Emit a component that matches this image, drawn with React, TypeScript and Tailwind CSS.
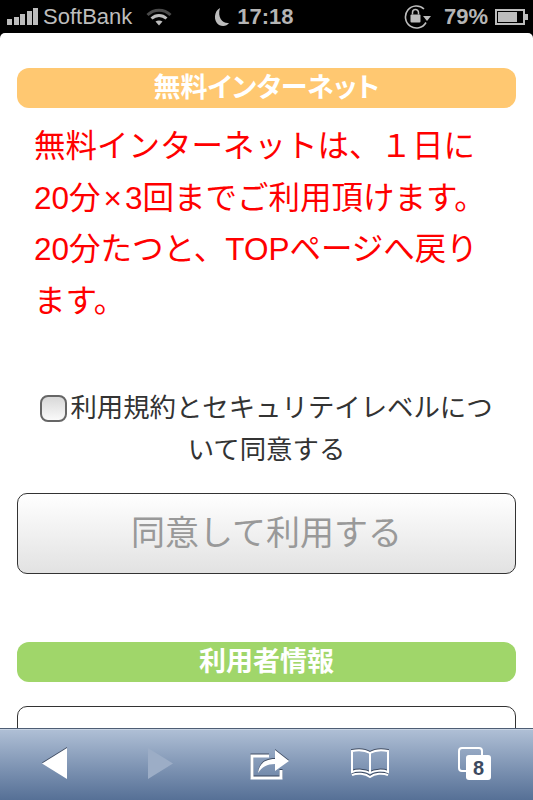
import React from 'react'

const jp = 'font-["Liberation_Sans","Noto_Sans_CJK_JP",sans-serif]'

function StatusBar() {
  return (
    <div className="relative h-[33px] shrink-0 bg-black font-['Liberation_Sans',sans-serif] text-[#bdbdbd]">
      <div className="flex h-full items-center pl-[7px] pr-[5px]">
        <div className="flex items-end gap-[1.5px] pb-[1px]">
          <span className="h-[6px] w-[5px] bg-[#bdbdbd]" />
          <span className="h-[8px] w-[5px] bg-[#bdbdbd]" />
          <span className="h-[11px] w-[5px] bg-[#bdbdbd]" />
          <span className="h-[14px] w-[5px] bg-[#bdbdbd]" />
          <span className="h-[17px] w-[5px] bg-[#bdbdbd]" />
        </div>
        <span className="ml-[5px] text-[22px] leading-none">SoftBank</span>
        <svg className="ml-[14px]" width="26" height="18" viewBox="0 0 26 18" fill="none">
          <path d="M1.5 7 C8 0.5 18 0.5 24.5 7" stroke="#4a4a4a" strokeWidth="3" />
          <path d="M5.5 10.5 C10 6.5 16 6.5 20.5 10.5" stroke="#bdbdbd" strokeWidth="3" />
          <path d="M9.5 13.5 C11.5 12 14.5 12 16.5 13.5 L13 17.5 Z" fill="#bdbdbd" />
        </svg>
        <svg className="ml-[40px]" width="18" height="20" viewBox="0 0 18 20">
          <path d="M8 1 C2 4 1 14 7 18 C11 20 15 19 17 16 C11 17 5 11 8 1 Z" fill="#bdbdbd" />
        </svg>
        <span className="ml-[7px] text-[22px] leading-none font-bold text-[#b5b5b5]">17:18</span>
        <svg className="ml-auto" width="28" height="25" viewBox="0 0 28 25" fill="none">
          <path d="M23 18.5 A 11 11 0 1 1 21 5" stroke="#bdbdbd" strokeWidth="1.6" />
          <path d="M20 12 H28 L24 17 Z" fill="#bdbdbd" />
          <rect x="7.5" y="10.5" width="10" height="8" rx="1" fill="#bdbdbd" />
          <path d="M9.5 10.5 V8.5 A3 3 0 0 1 15.5 8.5 V10.5" stroke="#bdbdbd" strokeWidth="1.5" />
        </svg>
        <span className="ml-[13px] text-[22px] leading-none font-bold text-[#b5b5b5]">79%</span>
        <div className="ml-[7px] flex items-center">
          <div className="flex h-[16px] w-[30px] items-stretch border-2 border-[#bdbdbd] p-[1px]">
            <div className="w-[79%] bg-[#bdbdbd]" />
          </div>
          <span className="h-[6px] w-[3px] bg-[#bdbdbd]" />
        </div>
      </div>
    </div>
  )
}

function Banner({ color, children }: { color: string; children: React.ReactNode }) {
  return (
    <div className={`flex h-10 items-center justify-center rounded-[12px] text-[27px] font-bold text-white [font-feature-settings:'palt'] ${color}`}>
      {children}
    </div>
  )
}

function Toolbar() {
  const shadow = 'drop-shadow-[0_-1px_0_rgba(30,40,60,0.7)]'
  return (
    <div className="relative h-[72px] shrink-0 border-t border-[#4e5d74] bg-gradient-to-b from-[#b0c0d6] to-[#567096] shadow-[inset_0_1px_0_#c8d4e4]">
      <div className="flex h-full items-center pb-[2px] pl-[41px]">
        <svg className={shadow} width="26" height="33" viewBox="0 0 26 33">
          <path d="M26 1 V32 L1 16.5 Z" fill="#fff" />
        </svg>
        <svg className="ml-[81px]" width="26" height="33" viewBox="0 0 26 33">
          <path d="M0 1 V32 L25 16.5 Z" fill="#9cadc6" />
        </svg>
        <svg className={`ml-[76px] ${shadow}`} width="40" height="32" viewBox="0 0 40 32" fill="none">
          <path d="M19 8 H2 V30 H31 V22" stroke="#fff" strokeWidth="3" />
          <path d="M8 25 C9 15 16 11 25 11 V2 L39 13 L25 23 V16 C17 16 12 19 8 25 Z" fill="#fff" />
        </svg>
        <svg className={`ml-[60px] ${shadow}`} width="40" height="29" viewBox="0 0 40 29" fill="none" stroke="#fff" strokeWidth="2">
          <path d="M20 4 C15 1 7 1 2 2 V23 C7 21 15 21 20 24 C25 21 33 21 38 23 V2 C33 1 25 1 20 4 Z" />
          <path d="M20 4 V24" />
          <path d="M2 26 C7 24 15 24 20 28 C25 24 33 24 38 26" />
        </svg>
        <div className="relative ml-[68px] h-[33px] w-[33px]">
          <div className="h-[25px] w-[25px] rounded-[4px] border-2 border-[#fff]" />
          <div className="absolute bottom-0 right-0 flex h-[25px] w-[25px] items-center justify-center rounded-[3px] bg-white font-['Liberation_Sans',sans-serif] text-[20px] font-bold text-[#3d4a60]">
            8
          </div>
        </div>
      </div>
    </div>
  )
}

export default function App() {
  return (
    <div className={`flex h-[800px] w-[533px] flex-col overflow-hidden bg-black ${jp}`}>
      <StatusBar />
      <div className="min-h-0 flex-1 overflow-hidden rounded-t-[5px] bg-white px-[17px] pt-[35px]">
        <Banner color="bg-[#ffc871]">無料インターネット</Banner>
        <p className="mt-[13px] pl-[17px] pr-[10px] text-[31.5px] leading-[51.7px] text-[#ff0000]">
          無料インターネットは、１日に<br />
          20分<span className="mx-[3px]">×</span>3回までご利用頂けます。<br />
          20分たつと、TOPページへ戻り<br />
          ます。
        </p>
        <div className="mt-[59px] px-[14px] text-center text-[26.4px] leading-[42px] text-[#333]">
          <input
            type="checkbox"
            className="mr-[3px] inline-block h-[27px] w-[27px] appearance-none rounded-[8px] border-2 border-[#666] bg-gradient-to-b from-[#d8d8d8] to-[#fafafa] align-[-5px]"
          />
          利用規約とセキュリテイレベルについて同意する
        </div>
        <button className="mt-[22px] flex h-[81px] w-full items-center justify-center rounded-[10px] border border-[#333] bg-gradient-to-b from-white to-[#e2e2e2] text-[34px] text-[#999]">
          同意して利用する
        </button>
        <div className="mt-[68px]">
          <Banner color="bg-[#a0d66a]">利用者情報</Banner>
        </div>
        <div className="mt-6 h-[80px] rounded-[10px] border border-[#333] bg-white" />
      </div>
      <Toolbar />
    </div>
  )
}
